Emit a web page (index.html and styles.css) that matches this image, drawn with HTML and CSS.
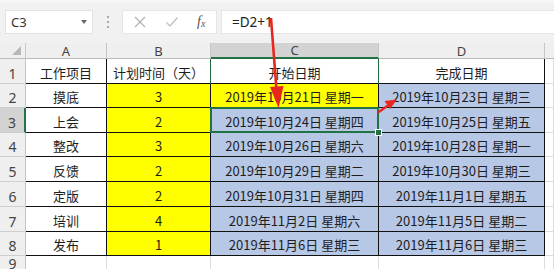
FILE: index.html
```html
<!DOCTYPE html>
<html>
    <head>
        <link rel="stylesheet" href="styles.css">
    </head>
    <body>
        <div class="toolbar">
            <div class="namebox">
                <span>C3</span>
                <span class="drop"></span>
            </div>
            <div class="grip"><i></i><i></i><i></i></div>
            <div class="buttons">
                <svg width="14" height="14" viewBox="0 0 14 14"><path d="M2 2L12 12M12 2L2 12" stroke="#b3b3b3" stroke-width="1.3" fill="none"/></svg>
                <svg width="14" height="14" viewBox="0 0 14 14"><path d="M1.5 7.5L5 11L12.5 2.5" stroke="#c2c2c2" stroke-width="1.4" fill="none"/></svg>
                <span class="fx">f<sub>x</sub></span>
            </div>
            <div class="formula">=D2+1</div>
        </div>

        <div class="sheet">
            <div class="corner"></div>
            <div class="colhead">A</div>
            <div class="colhead">B</div>
            <div class="colhead sel">C</div>
            <div class="colhead">D</div>
            <div class="colhead edge"></div>

            <div class="rowhead">1</div>
            <div class="cell">工作项目</div>
            <div class="cell green-right">计划时间（天）</div>
            <div class="cell green-right">开始日期</div>
            <div class="cell">完成日期</div>
            <div class="grid"></div>

            <div class="rowhead">2</div>
            <div class="cell">摸底</div>
            <div class="cell yellow">3</div>
            <div class="cell yellow">2019年10月21日 星期一</div>
            <div class="cell blue">2019年10月23日 星期三</div>
            <div class="grid"></div>

            <div class="rowhead sel">3</div>
            <div class="cell">上会</div>
            <div class="cell yellow">2</div>
            <div class="cell blue active">2019年10月24日 星期四</div>
            <div class="cell blue">2019年10月25日 星期五</div>
            <div class="grid"></div>

            <div class="rowhead">4</div>
            <div class="cell">整改</div>
            <div class="cell yellow">3</div>
            <div class="cell blue">2019年10月26日 星期六</div>
            <div class="cell blue">2019年10月28日 星期一</div>
            <div class="grid"></div>

            <div class="rowhead">5</div>
            <div class="cell">反馈</div>
            <div class="cell yellow">2</div>
            <div class="cell blue">2019年10月29日 星期二</div>
            <div class="cell blue">2019年10月30日 星期三</div>
            <div class="grid"></div>

            <div class="rowhead">6</div>
            <div class="cell">定版</div>
            <div class="cell yellow">2</div>
            <div class="cell blue">2019年10月31日 星期四</div>
            <div class="cell blue">2019年11月1日 星期五</div>
            <div class="grid"></div>

            <div class="rowhead">7</div>
            <div class="cell">培训</div>
            <div class="cell yellow">4</div>
            <div class="cell blue">2019年11月2日 星期六</div>
            <div class="cell blue">2019年11月5日 星期二</div>
            <div class="grid"></div>

            <div class="rowhead">8</div>
            <div class="cell">发布</div>
            <div class="cell yellow">1</div>
            <div class="cell blue">2019年11月6日 星期三</div>
            <div class="cell blue">2019年11月6日 星期三</div>
            <div class="grid"></div>

            <div class="rowhead">9</div>
            <div class="grid"></div>
            <div class="grid"></div>
            <div class="grid"></div>
            <div class="grid"></div>
            <div class="grid"></div>
        </div>

        <svg class="arrows" width="554" height="269" viewBox="0 0 554 269">
            <path d="M271 18L276.5 90" stroke="#e8261e" stroke-width="2.6" fill="none"/>
            <polygon points="278.5,108 270,87 283.5,86" fill="#e8261e"/>
            <path d="M378 112.5L388 105.5" stroke="#e8261e" stroke-width="2.4" fill="none"/>
            <polygon points="397,99.5 384.5,101 390,109" fill="#e8261e"/>
        </svg>
    </body>
</html>
```

FILE: styles.css
```css
body {
    margin: 0;
    width: 554px;
    height: 269px;
    overflow: hidden;
    position: relative;
    background: #f1f1f1;
    font-family: "Noto Sans CJK SC", "Noto Sans", sans-serif;
    color: #1e1e1e;
}
.toolbar {
    height: 43px;
    box-sizing: border-box;
    border-top: 3px solid #f6f6f6;
    display: flex;
    align-items: flex-start;
}
.toolbar > div {
    margin-top: 7px;
    height: 24px;
    box-sizing: border-box;
}
.namebox {
    margin-left: 5px;
    width: 88px;
    background: #fff;
    border: 1px solid #e2e2e2;
    display: flex;
    align-items: center;
    justify-content: space-between;
    padding: 0 5px 0 5px;
    font-family: "Noto Sans", sans-serif;
    font-size: 13px;
    color: #333;
}
.drop {
    width: 0;
    height: 0;
    border-left: 3.5px solid transparent;
    border-right: 3.5px solid transparent;
    border-top: 4px solid #6a6a6a;
}
.grip {
    width: 29px;
    display: flex;
    flex-direction: column;
    align-items: center;
    justify-content: center;
    gap: 3px;
}
.grip i {
    width: 2px;
    height: 2px;
    background: #a8a8a8;
}
.buttons {
    width: 95px;
    background: #fff;
    border: 1px solid #e6e6e6;
    display: flex;
    align-items: center;
    padding-left: 10px;
    gap: 18px;
}
.fx {
    font-family: "Liberation Serif", serif;
    font-style: italic;
    font-size: 14px;
    color: #555;
    margin-left: 0;
}
.fx sub {
    font-size: 10px;
    vertical-align: -1px;
}
.formula {
    margin-left: 4px;
    flex: 1;
    background: #fff;
    border: 1px solid #e6e6e6;
    border-right: none;
    padding-left: 10px;
    font-family: "Noto Sans", sans-serif;
    font-size: 13.5px;
    line-height: 22px;
    color: #222;
}
.sheet {
    display: grid;
    grid-template-columns: 26px 81px 104px 168px 166px 9px;
    grid-template-rows: 16px 25px 24px 25px 24px 25px 25px 25px 24px 1fr;
    height: 226px;
    background: #fff;
}
.sheet > div {
    box-sizing: border-box;
}
.corner {
    background: #efefef;
    border-right: 1px solid #c9c9c9;
    border-bottom: 1px solid #bcbcbc;
    position: relative;
}
.corner::after {
    content: "";
    position: absolute;
    right: 4px;
    bottom: 3px;
    width: 0;
    height: 0;
    border-left: 9px solid transparent;
    border-bottom: 9px solid #b8b8b8;
}
.colhead {
    background: #efefef;
    border-right: 1px solid #c6c6c6;
    border-bottom: 1px solid #bcbcbc;
    font-family: "Noto Sans", sans-serif;
    font-size: 13px;
    color: #444;
    text-align: center;
    line-height: 16px;
}
.colhead.sel {
    background: #d3d3d3;
    border-bottom: 2px solid #217346;
    line-height: 15px;
}
.colhead.edge {
    border-right: none;
}
.rowhead {
    background: #efefef;
    border-right: 1px solid #c6c6c6;
    border-bottom: 1px solid #cfcfcf;
    font-family: "Noto Sans", sans-serif;
    font-size: 14px;
    color: #444;
    display: flex;
    align-items: flex-end;
    justify-content: center;
    line-height: 16px;
    padding-bottom: 1px;
}
.rowhead.sel {
    background: #d3d3d3;
    border-right: 2px solid #217346;
}
.cell {
    border-right: 1px solid #111;
    border-bottom: 1px solid #111;
    font-size: 13px;
    display: flex;
    align-items: center;
    justify-content: center;
    padding-top: 2px;
    white-space: nowrap;
}
.cell.green-right {
    border-right-color: #1f6b41;
}
.yellow {
    background: #ffff00;
}
.blue {
    background: #b7c7e6;
}
.active {
    position: relative;
}
.active::after {
    content: "";
    position: absolute;
    left: -1px;
    top: -1px;
    right: -1px;
    bottom: -1px;
    border: 2px solid #217346;
}
.active::before {
    content: "";
    position: absolute;
    right: -4px;
    bottom: -4px;
    width: 5px;
    height: 5px;
    background: #217346;
    border: 1px solid #fff;
    z-index: 1;
}
.grid {
    border-right: 1px solid #dcdcdc;
    border-bottom: 1px solid #dcdcdc;
}
.arrows {
    position: absolute;
    left: 0;
    top: 0;
    pointer-events: none;
}
```
